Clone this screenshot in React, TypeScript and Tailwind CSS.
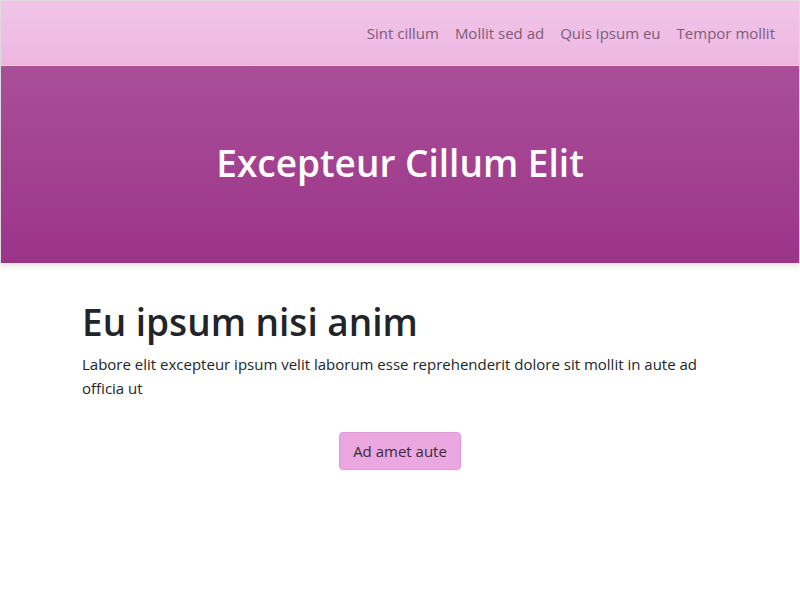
const NAV_LINKS = ["Sint cillum", "Mollit sed ad", "Quis ipsum eu", "Tempor mollit"] as const;

export default function App() {
  return (
    <div
      className="min-h-[600px] bg-white text-[#212529]"
      style={{ fontFamily: '"Open Sans", "Noto Sans", sans-serif' }}
    >
      <nav className="flex h-[66px] items-center justify-end border border-[#dcdcdc] bg-gradient-to-b from-[#f0c5e8] to-[#eeb7e3] pr-[24px]">
        <ul className="flex items-center gap-[16px]">
          {NAV_LINKS.map((label) => (
            <li key={label}>
              <a href="#" className="text-[15px] text-[#7d5c78]">
                {label}
              </a>
            </li>
          ))}
        </ul>
      </nav>

      <header className="flex h-[197px] items-center justify-center border-x border-[#dcdcdc] bg-gradient-to-b from-[#a94f98] to-[#9c3389] pb-[5px] shadow-[0_3px_6px_rgba(0,0,0,0.12)]">
        <h1 className="text-[37px] font-semibold leading-none text-white">
          Excepteur Cillum Elit
        </h1>
      </header>

      <main className="mx-auto w-[636px] pt-[35px]">
        <h2 className="text-[37px] font-semibold leading-[48px] text-[#212529]">
          Eu ipsum nisi anim
        </h2>
        <p className="mt-[6px] text-[15px] leading-[24px] text-[#212529]">
          Labore elit excepteur ipsum velit laborum esse reprehenderit dolore sit
          mollit in aute ad officia ut
        </p>
        <div className="mt-[32px] flex justify-center">
          <button
            type="button"
            className="h-[38px] rounded-[4px] border border-[#e09ad6] bg-[#eaa7e0] px-[13px] text-[15px] text-[#3a2a37]"
          >
            Ad amet aute
          </button>
        </div>
      </main>
    </div>
  );
}
